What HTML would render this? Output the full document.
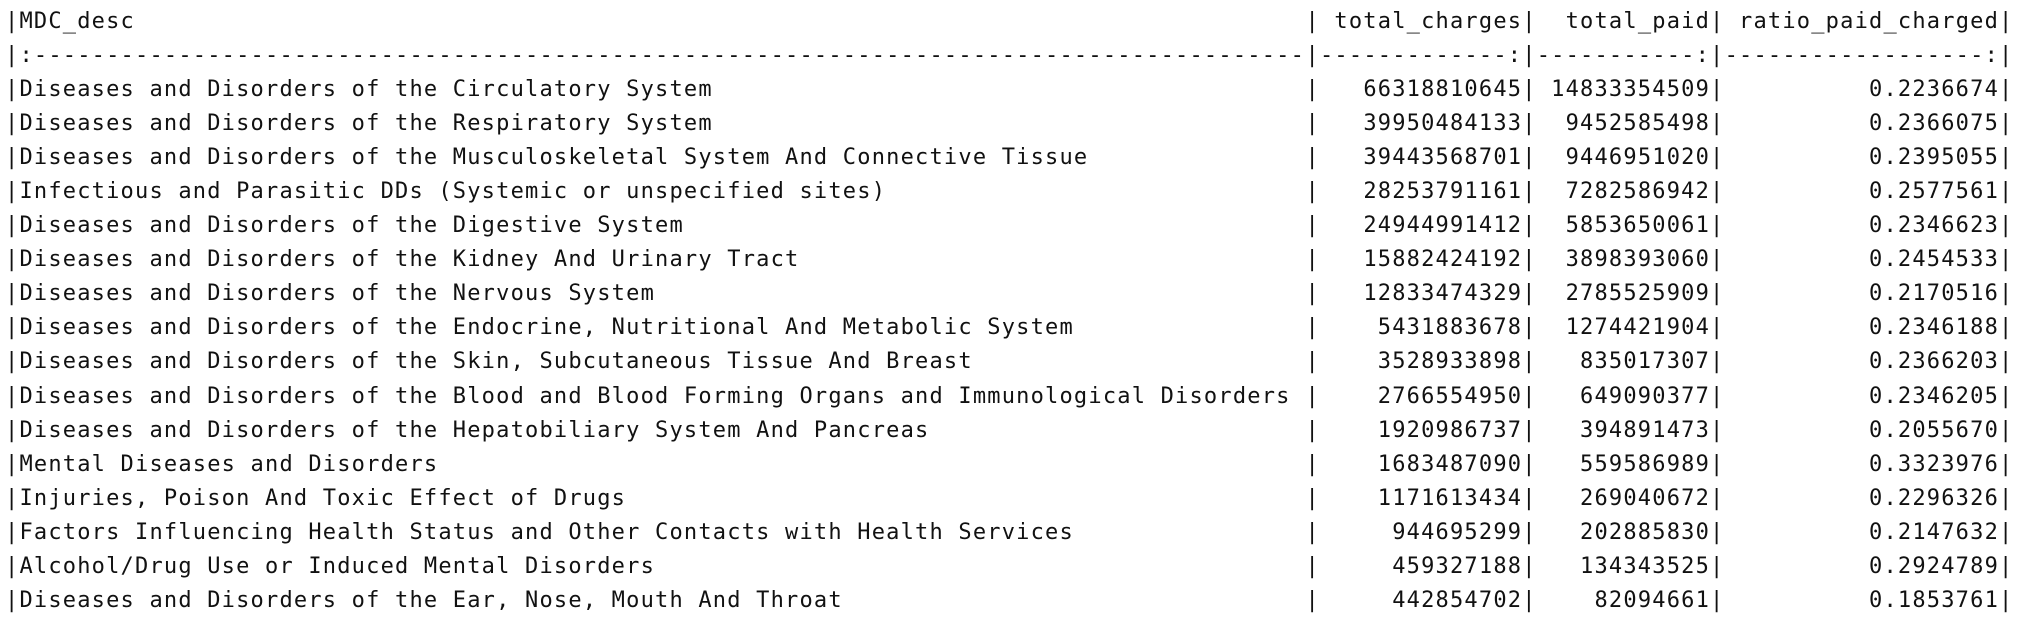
<!DOCTYPE html>
<html><head><meta charset="utf-8"><style>
html,body{margin:0;padding:0;background:#fff;}
body{width:2020px;height:628px;overflow:hidden;font-family:"DejaVu Sans Mono","Liberation Mono",monospace;font-size:22px;letter-spacing:1.2px;color:#111;}
.w{position:absolute;left:5px;top:5px;}
.r{display:flex;height:34.06px;line-height:34px;white-space:pre;}
.r span{display:block;flex:none;}
.p{width:14.45px;text-align:center;}
.a{width:1286.05px;}
.b{width:202.3px;text-align:right;}
.c{width:173.4px;text-align:right;}
.d{width:274.55px;text-align:right;}
.s{overflow:hidden;}
</style></head><body><div class="w">
<div class="r"><span class="p">|</span><span class="a">MDC_desc</span><span class="p">|</span><span class="b">total_charges</span><span class="p">|</span><span class="c">total_paid</span><span class="p">|</span><span class="d">ratio_paid_charged</span><span class="p">|</span></div>
<div class="r"><span class="p">|</span><span class="a s">:----------------------------------------------------------------------------------------</span><span class="p">|</span><span class="b s">-------------:</span><span class="p">|</span><span class="c s">-----------:</span><span class="p">|</span><span class="d s">------------------:</span><span class="p">|</span></div>
<div class="r"><span class="p">|</span><span class="a">Diseases and Disorders of the Circulatory System</span><span class="p">|</span><span class="b">66318810645</span><span class="p">|</span><span class="c">14833354509</span><span class="p">|</span><span class="d">0.2236674</span><span class="p">|</span></div>
<div class="r"><span class="p">|</span><span class="a">Diseases and Disorders of the Respiratory System</span><span class="p">|</span><span class="b">39950484133</span><span class="p">|</span><span class="c">9452585498</span><span class="p">|</span><span class="d">0.2366075</span><span class="p">|</span></div>
<div class="r"><span class="p">|</span><span class="a">Diseases and Disorders of the Musculoskeletal System And Connective Tissue</span><span class="p">|</span><span class="b">39443568701</span><span class="p">|</span><span class="c">9446951020</span><span class="p">|</span><span class="d">0.2395055</span><span class="p">|</span></div>
<div class="r"><span class="p">|</span><span class="a">Infectious and Parasitic DDs (Systemic or unspecified sites)</span><span class="p">|</span><span class="b">28253791161</span><span class="p">|</span><span class="c">7282586942</span><span class="p">|</span><span class="d">0.2577561</span><span class="p">|</span></div>
<div class="r"><span class="p">|</span><span class="a">Diseases and Disorders of the Digestive System</span><span class="p">|</span><span class="b">24944991412</span><span class="p">|</span><span class="c">5853650061</span><span class="p">|</span><span class="d">0.2346623</span><span class="p">|</span></div>
<div class="r"><span class="p">|</span><span class="a">Diseases and Disorders of the Kidney And Urinary Tract</span><span class="p">|</span><span class="b">15882424192</span><span class="p">|</span><span class="c">3898393060</span><span class="p">|</span><span class="d">0.2454533</span><span class="p">|</span></div>
<div class="r"><span class="p">|</span><span class="a">Diseases and Disorders of the Nervous System</span><span class="p">|</span><span class="b">12833474329</span><span class="p">|</span><span class="c">2785525909</span><span class="p">|</span><span class="d">0.2170516</span><span class="p">|</span></div>
<div class="r"><span class="p">|</span><span class="a">Diseases and Disorders of the Endocrine, Nutritional And Metabolic System</span><span class="p">|</span><span class="b">5431883678</span><span class="p">|</span><span class="c">1274421904</span><span class="p">|</span><span class="d">0.2346188</span><span class="p">|</span></div>
<div class="r"><span class="p">|</span><span class="a">Diseases and Disorders of the Skin, Subcutaneous Tissue And Breast</span><span class="p">|</span><span class="b">3528933898</span><span class="p">|</span><span class="c">835017307</span><span class="p">|</span><span class="d">0.2366203</span><span class="p">|</span></div>
<div class="r"><span class="p">|</span><span class="a">Diseases and Disorders of the Blood and Blood Forming Organs and Immunological Disorders</span><span class="p">|</span><span class="b">2766554950</span><span class="p">|</span><span class="c">649090377</span><span class="p">|</span><span class="d">0.2346205</span><span class="p">|</span></div>
<div class="r"><span class="p">|</span><span class="a">Diseases and Disorders of the Hepatobiliary System And Pancreas</span><span class="p">|</span><span class="b">1920986737</span><span class="p">|</span><span class="c">394891473</span><span class="p">|</span><span class="d">0.2055670</span><span class="p">|</span></div>
<div class="r"><span class="p">|</span><span class="a">Mental Diseases and Disorders</span><span class="p">|</span><span class="b">1683487090</span><span class="p">|</span><span class="c">559586989</span><span class="p">|</span><span class="d">0.3323976</span><span class="p">|</span></div>
<div class="r"><span class="p">|</span><span class="a">Injuries, Poison And Toxic Effect of Drugs</span><span class="p">|</span><span class="b">1171613434</span><span class="p">|</span><span class="c">269040672</span><span class="p">|</span><span class="d">0.2296326</span><span class="p">|</span></div>
<div class="r"><span class="p">|</span><span class="a">Factors Influencing Health Status and Other Contacts with Health Services</span><span class="p">|</span><span class="b">944695299</span><span class="p">|</span><span class="c">202885830</span><span class="p">|</span><span class="d">0.2147632</span><span class="p">|</span></div>
<div class="r"><span class="p">|</span><span class="a">Alcohol/Drug Use or Induced Mental Disorders</span><span class="p">|</span><span class="b">459327188</span><span class="p">|</span><span class="c">134343525</span><span class="p">|</span><span class="d">0.2924789</span><span class="p">|</span></div>
<div class="r"><span class="p">|</span><span class="a">Diseases and Disorders of the Ear, Nose, Mouth And Throat</span><span class="p">|</span><span class="b">442854702</span><span class="p">|</span><span class="c">82094661</span><span class="p">|</span><span class="d">0.1853761</span><span class="p">|</span></div>
</div></body></html>
